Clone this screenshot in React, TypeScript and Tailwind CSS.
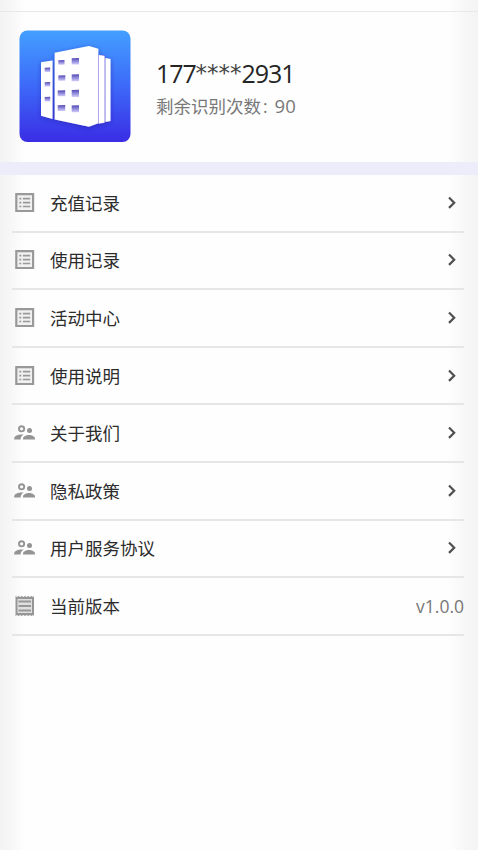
type IconKind = 'list' | 'people' | 'receipt'

interface Item {
  label: string
  icon: IconKind
  value?: string
}

const items: Item[] = [
  { label: '充值记录', icon: 'list' },
  { label: '使用记录', icon: 'list' },
  { label: '活动中心', icon: 'list' },
  { label: '使用说明', icon: 'list' },
  { label: '关于我们', icon: 'people' },
  { label: '隐私政策', icon: 'people' },
  { label: '用户服务协议', icon: 'people' },
  { label: '当前版本', icon: 'receipt', value: 'v1.0.0' },
]

function ItemIcon({ kind }: { kind: IconKind }) {
  if (kind === 'people') {
    return (
      <svg className="h-[22px] w-[22px]" viewBox="0 0 22 22" fill="#949494">
        <circle cx="7.6" cy="6.8" r="2.6" fill="none" stroke="#949494" strokeWidth="1.9" />
        <circle cx="15.5" cy="8.6" r="2.5" />
        <path d="M.2 17.4v-1.2c0-2.4 4.2-3.8 7.5-3.8.9 0 1.5.1 2.2.2-2 1-3.3 2.4-3.3 4.8z" />
        <path d="M9 17.4v-.9c0-2.3 3.5-3.6 6-3.6s6 1.3 6 3.6v.9z" />
      </svg>
    )
  }

  if (kind === 'receipt') {
    return (
      <svg className="h-[22px] w-[22px]" viewBox="0 0 22 22" fill="none">
        <path
          d="M1.5 1L3 2l1.6-1 1.6 1 1.6-1 1.6 1L11 1l1.6 1 1.6-1 1.6 1 1.6-1L19 2l1-1v20l-1-1-1.6 1-1.6-1-1.6 1-1.6-1-1.6 1-1.6-1-1.6 1-1.6-1-1.6 1L3 20l-1.5 1z"
          fill="#969696"
        />
        <path d="M3.5 4H18v14H3.5z" fill="#dedede" />
        <path d="M4.5 6.5H17M4.5 11H17M4.5 15.5H17" stroke="#979797" strokeWidth="1.8" />
      </svg>
    )
  }

  return (
    <svg className="h-[22px] w-[22px]" viewBox="0 0 22 22" fill="none">
      <path d="M2.3 2.2h16.8v16.8H2.3z" fill="#f1f1f1" stroke="#999" strokeWidth="2.2" />
      <path d="M5.3 6.7h2M5.3 10.6h2M5.3 14.5h2M8.9 6.7h7.3M8.9 10.6h7.3M8.9 14.5h7.3" stroke="#999" strokeWidth="1.7" />
    </svg>
  )
}

// left edge, top edge, width and height of every window
const windows = [
  [25.7, 37.5, 5.5, 4.5],
  [25.7, 52, 5.5, 4.5],
  [25.7, 66.7, 5.5, 4.8],
  [39.3, 30, 6.2, 4.8],
  [39.3, 45.2, 7, 5.6],
  [38.7, 60.3, 7.5, 6],
  [38.7, 75, 7.5, 6],
  [52.7, 28, 7.3, 6.5],
  [52.7, 44.2, 7.3, 7],
  [52.7, 59.7, 7.3, 7.2],
  [52.7, 75.3, 7.3, 7],
]

function Logo() {
  return (
    <svg className="h-[112px] w-[112px] shrink-0" viewBox="0 0 112 112">
      <defs>
        <linearGradient id="sky" x1="0" y1="0" x2="0" y2="1">
          <stop offset="0" stopColor="#439fff" />
          <stop offset="0.5" stopColor="#3d69f8" />
          <stop offset="1" stopColor="#3a2de5" />
        </linearGradient>
        <linearGradient id="pane" x1="0" y1="0" x2="0" y2="1">
          <stop offset="0" stopColor="#5148b5" />
          <stop offset="1" stopColor="#d0ccfc" />
        </linearGradient>
        <filter id="shade" x="-20%" y="-20%" width="140%" height="140%">
          <feDropShadow dx="0" dy="1.5" stdDeviation="2" floodColor="#281aa8" floodOpacity="0.6" />
        </filter>
      </defs>
      <rect x="0.5" y="0.5" width="111" height="111.5" rx="8" fill="url(#sky)" />
      <g filter="url(#shade)">
        <path d="M79 25h6.5v2.7h1v64h-1V93l-6.5 1z" fill="#8b80e6" />
        <path d="M22 32.2l11.5-1.7V89L22 85.7z" fill="#fff" />
        <path d="M80 25l5.5 1v66.5L80 93.5zM86.5 28l5 1v62l-5 1z" fill="#fff" />
        <path d="M35.7 22.8L70 16l9.3 2.7v74.5L70 96.8l-34.3-7.3z" fill="#fff" />
      </g>
      {windows.map(([x, y, w, h]) => (
        <path key={`${x}-${y}`} d={`M${x} ${y + 0.3}l${w}-.3v${h}h-${w}z`} fill="url(#pane)" />
      ))}
    </svg>
  )
}

export default function App() {
  return (
    <div className="flex h-[850px] w-full flex-col bg-[linear-gradient(to_right,#f3f3f3_0px,#f6f6f6_9px,#fefefe_25px,#fefefe_448px,#f6f6f6_468px,#f4f4f4_478px)] font-['Noto_Sans_CJK_SC',sans-serif]">
      <div className="h-3 shrink-0 border-b border-[#e8e8e8]" />

      <header className="flex h-[150px] shrink-0 items-start pl-[19px] pt-[18px]">
        <Logo />
        <div className="ml-[25px] pt-[27px]">
          <div className="flex h-8 font-['Open_Sans',sans-serif] text-[25px] leading-[32px] tracking-[-1.1px] text-[#252525]">
            <span>177</span>
            <span className="font-['DejaVu_Sans',sans-serif] text-[23px] tracking-[0px] text-[#444]">****</span>
            <span>2931</span>
          </div>
          <div className="mt-1 flex text-[17.5px] leading-[26px] text-[#787878]">
            <span>剩余识别次数</span>
            <span className="ml-[2px] font-['Open_Sans',sans-serif]">:</span>
            <span className="ml-[7px] font-['Open_Sans',sans-serif] text-[18.5px]">90</span>
          </div>
        </div>
      </header>

      <div className="h-[13px] shrink-0 bg-[#ececfa]" />

      <ul className="ml-3 mr-[14px]">
        {items.map((item) => (
          <li key={item.label} className="flex h-[57.6px] items-center border-b-2 border-[#e6e6e6] pl-[2px]">
            <ItemIcon kind={item.icon} />
            <span className="ml-[14px] text-[17.5px] leading-[26px] text-[#2c2c2c]">{item.label}</span>
            {item.value ? (
              <span className="ml-auto font-['Open_Sans',sans-serif] text-[17.5px] text-[#777]">{item.value}</span>
            ) : (
              <svg className="ml-auto mr-[7px] h-[14px] w-[10px]" viewBox="0 0 10 14" fill="none">
                <path d="M2 1.5L7.2 6.7 2 11.9" stroke="#505050" strokeWidth="2.2" />
              </svg>
            )}
          </li>
        ))}
      </ul>
    </div>
  )
}
